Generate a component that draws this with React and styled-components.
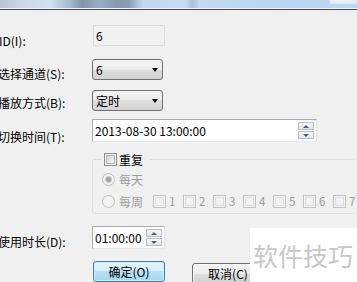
import React from "react";
import styled, { createGlobalStyle } from "styled-components";

const Global = createGlobalStyle`
  html, body { margin: 0; padding: 0; background: #f0f0f0; }
  body { width: 357px; height: 282px; overflow: hidden; }
`;

const Window = styled.div`
  position: relative;
  width: 357px;
  height: 282px;
  overflow: hidden;
  background: #f0f0f0;
  font-family: "Noto Sans CJK SC", "Noto Sans", sans-serif;
  font-size: 12px;
  color: #000;
`;

const TitleBar = styled.div`
  height: 10px;
  background:
    linear-gradient(to bottom, transparent 8px, #f4f7fb 8px, #f4f7fb 9px, #3d4650 9px),
    linear-gradient(#eef3f8, #dfe8f1) right top / 27px 4px no-repeat,
    linear-gradient(
      to right,
      #bcc6d2 0,
      #c9d6e4 6%,
      #d3e2f2 14%,
      #a3b6cc 20%,
      #8494ab 23%,
      #9aacc4 28%,
      #8797af 33%,
      #8c9db4 36%,
      #c2d8ef 40%,
      #c6dcf2 52%,
      #a7c0dc 54%,
      #c3daf2 56%,
      #b9d5f3 80%,
      #bcd8f4 100%
    );
`;

const Form = styled.div`
  margin-left: -2px;
  display: flex;
  flex-direction: column;
`;

const Row = styled.div`
  display: grid;
  grid-template-columns: 94px auto;
  align-items: start;
  margin-top: ${(p) => p.$mt}px;
  ${(p) => (p.$h ? `height: ${p.$h}px;` : "")}
`;

const Label = styled.span`
  padding-top: ${(p) => p.$offset}px;
  padding-left: ${(p) => p.$indent || 0}px;
  line-height: 14px;
  white-space: nowrap;
`;

const ReadOnlyBox = styled.div`
  width: 72px;
  height: 21px;
  box-sizing: border-box;
  margin-left: 1px;
  border: 1px solid #d9d9d9;
  background: #f0f0f0;
  padding-left: 2px;
  line-height: 19px;
`;

const Select = styled.div`
  width: 71px;
  height: 21px;
  box-sizing: border-box;
  border: 1px solid #707070;
  border-radius: 3px;
  background: linear-gradient(#f4f4f4 0%, #ececec 50%, #dfdfdf 50%, #d2d2d2 100%);
  display: flex;
  align-items: center;
  justify-content: space-between;
  padding: 0 4px 0 3px;
  line-height: 19px;
`;

const Arrow = styled.span`
  width: 0;
  height: 0;
  border-left: 3.5px solid transparent;
  border-right: 3.5px solid transparent;
  border-top: 4px solid #000;
`;

const SpinField = styled.div`
  width: ${(p) => p.$w}px;
  height: 23px;
  box-sizing: border-box;
  border: 1px solid #abadb3;
  border-right-color: #dbdfe6;
  border-bottom-color: #e3e9ef;
  background: #fff;
  display: flex;
  align-items: center;
  justify-content: space-between;
  padding: 0 2px 0 2px;
  line-height: 19px;
`;

const Spinner = styled.div`
  display: flex;
  flex-direction: column;
  gap: 1px;
`;

const SpinButton = styled.div`
  width: 16px;
  height: 8px;
  box-sizing: border-box;
  border: 1px solid #b7bcc6;
  background: linear-gradient(#f6f6f6, #e2e4e8);
  display: flex;
  align-items: center;
  justify-content: center;
  &::after {
    content: "";
    width: 0;
    height: 0;
    border-left: 3px solid transparent;
    border-right: 3px solid transparent;
    ${(p) =>
      p.$down
        ? "border-top: 3px solid #4d5b78;"
        : "border-bottom: 3px solid #4d5b78;"}
  }
`;

const Group = styled.fieldset`
  margin: 0;
  width: 290px;
  min-width: 0;
  border: 1px solid #d5dfe5;
  border-radius: 3px;
  padding: 0 0 5px 9px;
  display: flex;
  flex-direction: column;
`;

const Legend = styled.legend`
  padding: 0 7px 0 2px;
  display: flex;
  align-items: center;
  gap: 2px;
  height: 13px;
  line-height: 13px;
`;

const Check = styled.span`
  width: 13px;
  height: 13px;
  box-sizing: border-box;
  flex: none;
  border: 1px solid ${(p) => (p.$disabled ? "#c2c2c2" : "#8e8f8f")};
  padding: 1px;
  background: #f4f4f4;
  display: flex;
  &::after {
    content: "";
    flex: 1;
    border: 1px solid ${(p) => (p.$disabled ? "#dedede" : "#b0b4ba")};
    background: ${(p) =>
      p.$disabled ? "#f2f2f2" : "linear-gradient(135deg, #cfd2d6, #f7f7f7)"};
  }
`;

const Radio = styled.span`
  width: 13px;
  height: 13px;
  box-sizing: border-box;
  flex: none;
  border-radius: 50%;
  border: 1px solid #bdbdbd;
  background: #f3f3f3;
  display: flex;
  align-items: center;
  justify-content: center;
  &::after {
    content: "";
    width: 5px;
    height: 5px;
    border-radius: 50%;
    background: ${(p) => (p.$checked ? "#a4a4a4" : "transparent")};
    box-shadow: ${(p) => (p.$checked ? "0 0 0 1px #c8c8c8" : "none")};
  }
`;

const OptionRow = styled.div`
  display: flex;
  align-items: center;
  height: 13px;
  margin-top: ${(p) => p.$mt}px;
  color: #9c9c9c;
`;

const OptionText = styled.span`
  margin-left: 4px;
  line-height: 13px;
`;

const Days = styled.div`
  display: flex;
  margin-left: 10px;
`;

const Day = styled.div`
  width: 30px;
  display: flex;
  align-items: center;
  gap: 3px;
  font-size: 11.5px;
  line-height: 13px;
  color: #9c9c9c;
`;

const Buttons = styled.div`
  display: flex;
  align-items: flex-start;
  gap: 27px;
  margin-left: 1px;
`;

const Button = styled.div`
  width: 72px;
  height: 21px;
  box-sizing: border-box;
  margin-top: ${(p) => (p.$primary ? 0 : 2)}px;
  border: 1px solid ${(p) => (p.$primary ? "#3c7fb1" : "#707070")};
  border-radius: 3px;
  background: ${(p) =>
    p.$primary
      ? "linear-gradient(#e5f4fc 0%, #d6eefb 50%, #b7e1f7 50%, #a6d6f1 100%)"
      : "linear-gradient(#f4f4f4 0%, #ececec 50%, #dfdfdf 50%, #d0d0d0 100%)"};
  box-shadow: ${(p) => (p.$primary ? "inset 0 0 0 1px #cdeefc" : "inset 0 0 0 1px #fafafa")};
  display: flex;
  align-items: center;
  justify-content: center;
  line-height: 19px;
`;

const Watermark = styled.div`
  position: absolute;
  left: 250px;
  top: 228px;
  width: 107px;
  height: 54px;
  background: #fff;
  display: flex;
  align-items: center;
  padding-left: 3px;
  box-sizing: border-box;
  font-size: 25px;
  color: #c7c7c7;
  white-space: nowrap;
`;

const DAYS = ["1", "2", "3", "4", "5", "6", "7"];

export default function App() {
  return (
    <Window>
      <Global />
      <TitleBar />
      <Form>
        <Row $mt={15} $h={21}>
          <Label $offset={9} $indent={1}>ID(I):</Label>
          <ReadOnlyBox>6</ReadOnlyBox>
        </Row>
        <Row $mt={13} $h={21}>
          <Label $offset={8}>选择通道(S):</Label>
          <Select>
            <span>6</span>
            <Arrow />
          </Select>
        </Row>
        <Row $mt={10} $h={21}>
          <Label $offset={6}>播放方式(B):</Label>
          <Select>
            <span>定时</span>
            <Arrow />
          </Select>
        </Row>
        <Row $mt={8} $h={23}>
          <Label $offset={11}>切换时间(T):</Label>
          <SpinField $w={225}>
            <span>2013-08-30 13:00:00</span>
            <Spinner>
              <SpinButton />
              <SpinButton $down />
            </Spinner>
          </SpinField>
        </Row>
        <Row $mt={11}>
          <span />
          <Group>
            <Legend>
              <Check />
              <span>重复</span>
            </Legend>
            <OptionRow $mt={7}>
              <Radio $checked />
              <OptionText>每天</OptionText>
            </OptionRow>
            <OptionRow $mt={9}>
              <Radio />
              <OptionText>每周</OptionText>
              <Days>
                {DAYS.map((d) => (
                  <Day key={d}>
                    <Check $disabled />
                    <span>{d}</span>
                  </Day>
                ))}
              </Days>
            </OptionRow>
          </Group>
        </Row>
        <Row $mt={12} $h={23}>
          <Label $offset={9}>使用时长(D):</Label>
          <SpinField $w={73}>
            <span>01:00:00</span>
            <Spinner>
              <SpinButton />
              <SpinButton $down />
            </Spinner>
          </SpinField>
        </Row>
        <Row $mt={12}>
          <span />
          <Buttons>
            <Button $primary>确定(O)</Button>
            <Button>取消(C)</Button>
          </Buttons>
        </Row>
      </Form>
      <Watermark>软件技巧</Watermark>
    </Window>
  );
}
